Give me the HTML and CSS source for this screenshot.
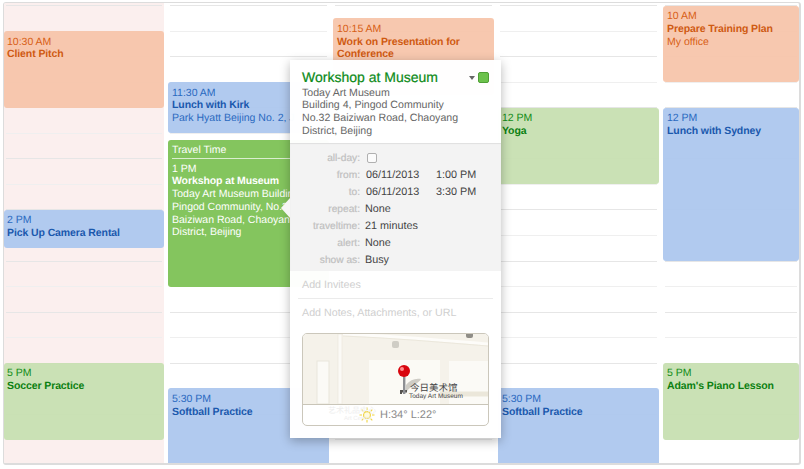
FILE: index.html
```html
<!DOCTYPE html>
<html lang="en">
<head>
    <meta charset="UTF-8">
    <meta name="viewport" content="width=device-width, initial-scale=1.0">
    <title>Calendar Week</title>
    <link rel="stylesheet" href="styles.css">
</head>
<body>
    <div class="calendar">
        <div class="day today">
            <div class="event orange ev-client">
                <div>10:30 AM</div>
                <div class="name">Client Pitch</div>
            </div>
            <div class="event blue ev-camera">
                <div>2 PM</div>
                <div class="name">Pick Up Camera Rental</div>
            </div>
            <div class="event green ev-soccer">
                <div>5 PM</div>
                <div class="name">Soccer Practice</div>
            </div>
        </div>

        <div class="day">
            <div class="event blue ev-kirk">
                <div>11:30 AM</div>
                <div class="name">Lunch with Kirk</div>
                <div class="one-line">Park Hyatt Beijing No. 2, J</div>
            </div>
            <div class="event selected ev-workshop">
                <div class="travel">Travel Time</div>
                <div>1 PM</div>
                <div class="name">Workshop at Museum</div>
                <div class="one-line">Today Art Museum Buildin<br>Pingod Community, No.3<br>Baiziwan Road, Chaoyang<br>District, Beijing</div>
            </div>
            <div class="event blue ev-softball">
                <div>5:30 PM</div>
                <div class="name">Softball Practice</div>
            </div>
        </div>

        <div class="day">
            <div class="event orange ev-talk">
                <div>10:15 AM</div>
                <div class="name">Work on Presentation for Conference</div>
            </div>
        </div>

        <div class="day">
            <div class="event green ev-yoga">
                <div>12 PM</div>
                <div class="name">Yoga</div>
            </div>
            <div class="event blue ev-softball">
                <div>5:30 PM</div>
                <div class="name">Softball Practice</div>
            </div>
        </div>

        <div class="day last">
            <div class="event orange ev-training">
                <div>10 AM</div>
                <div class="name">Prepare Training Plan</div>
                <div>My office</div>
            </div>
            <div class="event blue ev-sydney">
                <div>12 PM</div>
                <div class="name">Lunch with Sydney</div>
            </div>
            <div class="event green ev-piano">
                <div>5 PM</div>
                <div class="name">Adam's Piano Lesson</div>
            </div>
        </div>
    </div>

    <div class="popover">
        <div class="pop-head">
            <div class="pop-title-row">
                <h1>Workshop at Museum</h1>
                <span class="cal-arrow"></span>
                <span class="cal-swatch"></span>
            </div>
            <p>Today Art Museum<br>Building 4, Pingod Community<br>No.32 Baiziwan Road, Chaoyang<br>District, Beijing</p>
        </div>

        <div class="details">
            <div class="row"><label>all-day:</label><span class="checkbox"></span></div>
            <div class="row date"><label>from:</label><span class="date-val">06/11/2013</span><span>1:00 PM</span></div>
            <div class="row date"><label>to:</label><span class="date-val">06/11/2013</span><span>3:30 PM</span></div>
            <div class="row"><label>repeat:</label><span>None</span></div>
            <div class="row"><label>traveltime:</label><span>21 minutes</span></div>
            <div class="row"><label>alert:</label><span>None</span></div>
            <div class="row"><label>show as:</label><span>Busy</span></div>
        </div>

        <div class="extras">
            <div class="add invitees">Add Invitees</div>
            <div class="add notes">Add Notes, Attachments, or URL</div>

            <div class="map">
                <div class="map-area">
                    <svg class="map-art" width="185" height="70" viewBox="0 0 185 70">
                        <rect x="0" y="0" width="185" height="70" fill="#f5f2ea"/>
                        <rect x="35" y="0" width="4" height="70" fill="#fbfaf6" stroke="#e9e5da" stroke-width="0.6"/>
                        <rect x="14" y="27" width="12" height="43" fill="#fbfaf6" stroke="#e9e6db"/>
                        <rect x="66" y="26" width="71" height="44" fill="#fbfaf5"/>
                        <rect x="146" y="27" width="39" height="43" fill="#fbfaf6"/>
                        <path d="M137 60H185" stroke="#ebe7da" stroke-width="5"/>
                        <path d="M40 0C90 2 135 6 185 10" stroke="#fdfcf9" stroke-width="3" fill="none"/>
                        <path d="M40 2C90 4 135 8 185 12" stroke="#e6e2d6" stroke-width="0.7" fill="none"/>
                        <rect x="89" y="7" width="7" height="7" rx="2" fill="#cfcdc5"/>
                        <path d="M163 0h7v2a2 2 0 0 1-2 2h-3a2 2 0 0 1-2-2z" fill="#8f8d87"/>
                        <path d="M103 51C107 46 112 44 118 45C115 50 110 50 103 58Z" fill="#a9a69d" opacity=".55"/>
                        <path d="M97 56h7v2.500h-5v1.500h-2z" fill="#55534f"/>
                        <rect x="100" y="42" width="2.400" height="18" fill="#8d8f93"/>
                        <circle cx="101" cy="37" r="6" fill="#d8060f"/>
                        <circle cx="99" cy="35" r="2" fill="#ff8d8d"/>
                    </svg>
                    <div class="place-cn">今日美术馆</div>
                    <div class="place-en">Today Art Museum</div>
                </div>
                <div class="weather">
                    <div class="ghost">
                        <div class="ghost-cn">艺术礼品中心</div>
                        <div class="ghost-en">Art Center</div>
                    </div>
                    <svg width="16" height="16" viewBox="0 0 16 16">
                        <circle cx="8" cy="8" r="3.400" fill="#fffbe0" stroke="#f1d33c" stroke-width="1.100"/>
                        <path d="M8 0.500V3M8 13V15.500M0.500 8H3M13 8H15.500M2.700 2.700L4.400 4.400M11.600 11.600L13.300 13.300M2.700 13.300L4.400 11.600M11.600 4.400L13.300 2.700" stroke="#f1d33c" stroke-width="1.100"/>
                    </svg>
                    <span>H:34° L:22°</span>
                </div>
            </div>
        </div>
        <span class="pop-tip"></span>
    </div>
</body>
</html>
```

FILE: styles.css
```css
body {
    margin: 0;
    font-family: "Liberation Sans", Arial, sans-serif;
    font-size: 10.5px;
    text-rendering: geometricPrecision;
    background-color: #fff;
}

/* week grid */
.calendar {
    margin: 2px 0 0 3px;
    width: 798px;
    height: 463px;
    box-sizing: border-box;
    display: flex;
    gap: 4px;
    overflow: hidden;
    border: 1px solid #dcdcdc;
    border-width: 1px 2px 2px 1px;
    border-radius: 3px;
}

.day {
    position: relative;
    flex: 0 0 161px;
    box-sizing: border-box;
    padding-top: 2.5px;
    display: grid;
    grid-template-rows: repeat(36, 12.775px);
    grid-template-columns: 100%;
}

.day:first-child {
    flex-basis: 160px;
}

.day.last {
    flex: 1 1 auto;
    min-width: 0;
}

/* hour and half hour lines */
.day::before {
    content: "";
    position: absolute;
    top: 2px;
    bottom: 0;
    left: 2px;
    right: 2px;
    background-image: repeating-linear-gradient(to bottom,
        #e6e6e6 0, #e6e6e6 1px, transparent 1px, transparent 25.55px,
        #efefef 25.55px, #efefef 26.55px, transparent 26.55px, transparent 51.1px);
}

.day.today {
    background-color: #fbefee;
}

.today .event {
    padding-left: 3px;
}

.event {
    position: relative;
    padding: 4.5px 4px 0;
    line-height: 12.75px;
    border-radius: 3px;
    overflow: hidden;
    min-width: 0;
}

.name {
    font-weight: bold;
    letter-spacing: -0.1px;
}

.one-line {
    white-space: nowrap;
}

.orange {
    background-color: rgba(246, 197, 170, 0.94);
    color: #d75f16;
}

.orange .name {
    color: #cf5a12;
}

.blue {
    background-color: rgba(174, 200, 238, 0.96);
    color: #2a69c0;
}

.blue .name {
    color: #1a58ad;
}

.green {
    background-color: rgba(200, 224, 178, 0.96);
    color: #128c17;
}

.green .name {
    color: #0a7f10;
}

.selected {
    background-color: #84c55e;
    color: #fff;
    padding-top: 0;
    margin-top: 7px;
    margin-bottom: -1px;
}

.travel {
    height: 18px;
    line-height: 20px;
    margin-bottom: 3.5px;
    border-bottom: 1px solid rgba(255, 255, 255, 0.7);
}

/* slots are quarter hours, first line is 10 AM */
.ev-client { grid-row: 3 / 9; }
.ev-camera { grid-row: 17 / 20; }
.ev-soccer { grid-row: 29 / 35; }
.ev-kirk { grid-row: 7 / 11; }
.ev-workshop { grid-row: 11 / 23; }
.ev-softball { grid-row: 31 / 37; }
.ev-talk { grid-row: 2 / 8; }
.ev-yoga { grid-row: 9 / 15; }
.ev-training { grid-row: 1 / 7; }
.ev-sydney { grid-row: 9 / 21; }
.ev-piano { grid-row: 29 / 35; }

/* event popover */
.popover {
    position: absolute;
    left: 290px;
    top: 60px;
    width: 211px;
    height: 378px;
    background-color: rgba(255, 255, 255, 0.98);
    box-shadow: 0 3px 10px rgba(0, 0, 0, 0.28);
    color: #666;
}

.pop-tip {
    position: absolute;
    left: -9px;
    top: 138px;
    border-style: solid;
    border-width: 10px 9px 10px 0;
    border-color: transparent #f6f6f6 transparent transparent;
}

.pop-head {
    height: 83px;
    box-sizing: border-box;
    padding: 10px 12px 0;
    line-height: 12.75px;
    font-size: 10.6px;
}

.pop-title-row {
    display: flex;
    align-items: center;
    height: 15px;
}

.pop-title-row h1 {
    flex: 1;
    margin: 0;
    font-size: 14px;
    font-weight: normal;
    color: #0b8a17;
    -webkit-text-stroke: 0.2px #0b8a17;
}

.cal-arrow {
    margin-right: 3px;
    border-style: solid;
    border-width: 4px 3px 0;
    border-color: #666 transparent transparent;
}

.cal-swatch {
    width: 9px;
    height: 9px;
    background-color: #6cc24c;
    border: 1px solid #4f9f35;
    border-radius: 2px;
}

.pop-head p {
    margin: 1.5px 0 0;
}

.details {
    height: 128px;
    box-sizing: border-box;
    padding-top: 6.5px;
    background-color: #f3f3f3;
    box-shadow: inset 0 1px 1px rgba(0, 0, 0, 0.08);
    color: #444;
    font-size: 10.8px;
}

.row {
    display: flex;
    align-items: center;
    height: 17px;
}

.row label {
    width: 70px;
    margin-right: 5px;
    text-align: right;
    font-size: 10.2px;
    color: #bdbdbd;
    -webkit-text-stroke: 0.2px #c4c4c4;
}

.row.date label {
    margin-right: 6px;
}

.date-val {
    width: 70px;
}

.checkbox {
    box-sizing: border-box;
    width: 10px;
    height: 10px;
    margin-left: 2px;
    border: 1px solid #b0b0b0;
    border-radius: 2px;
    background-color: #fbfbfb;
}

.extras {
    padding: 0 12px;
    color: #cfcfcf;
}

.add {
    line-height: 13px;
    font-size: 10.7px;
}

.invitees {
    padding: 8px 0 6px;
    margin: 0 -4px;
    padding-left: 4px;
    border-bottom: 1px solid #ebebeb;
}

.notes {
    padding-top: 7.5px;
    height: 26.5px;
}

/* map with weather strip */
.map {
    width: 185px;
    height: 91px;
    border: 1px solid #cbc7bb;
    border-radius: 5px;
    overflow: hidden;
    background-color: #fff;
}

.map-area {
    position: relative;
    height: 70px;
    border-bottom: 1px solid #c9c5b8;
    overflow: hidden;
}

.map-art {
    display: block;
}

.place-cn {
    position: absolute;
    left: 107px;
    top: 48px;
    font-family: "Noto Sans CJK SC", sans-serif;
    font-size: 9.5px;
    line-height: 11px;
    color: #444;
}

.place-en {
    position: absolute;
    left: 106px;
    top: 59px;
    font-size: 6.5px;
    line-height: 8px;
    color: #444;
}

.weather {
    position: relative;
    display: flex;
    align-items: center;
    gap: 5px;
    height: 20px;
    padding-left: 56px;
    font-size: 11px;
    color: #8a8a8a;
}

/* map labels showing faintly through the strip */
.ghost {
    position: absolute;
    left: 25px;
    top: 1px;
    color: #eeeeee;
    line-height: 9px;
}

.ghost-cn {
    font-family: "Noto Sans CJK SC", sans-serif;
    font-size: 8px;
}

.ghost-en {
    font-size: 6px;
    margin-left: 16px;
}
```
